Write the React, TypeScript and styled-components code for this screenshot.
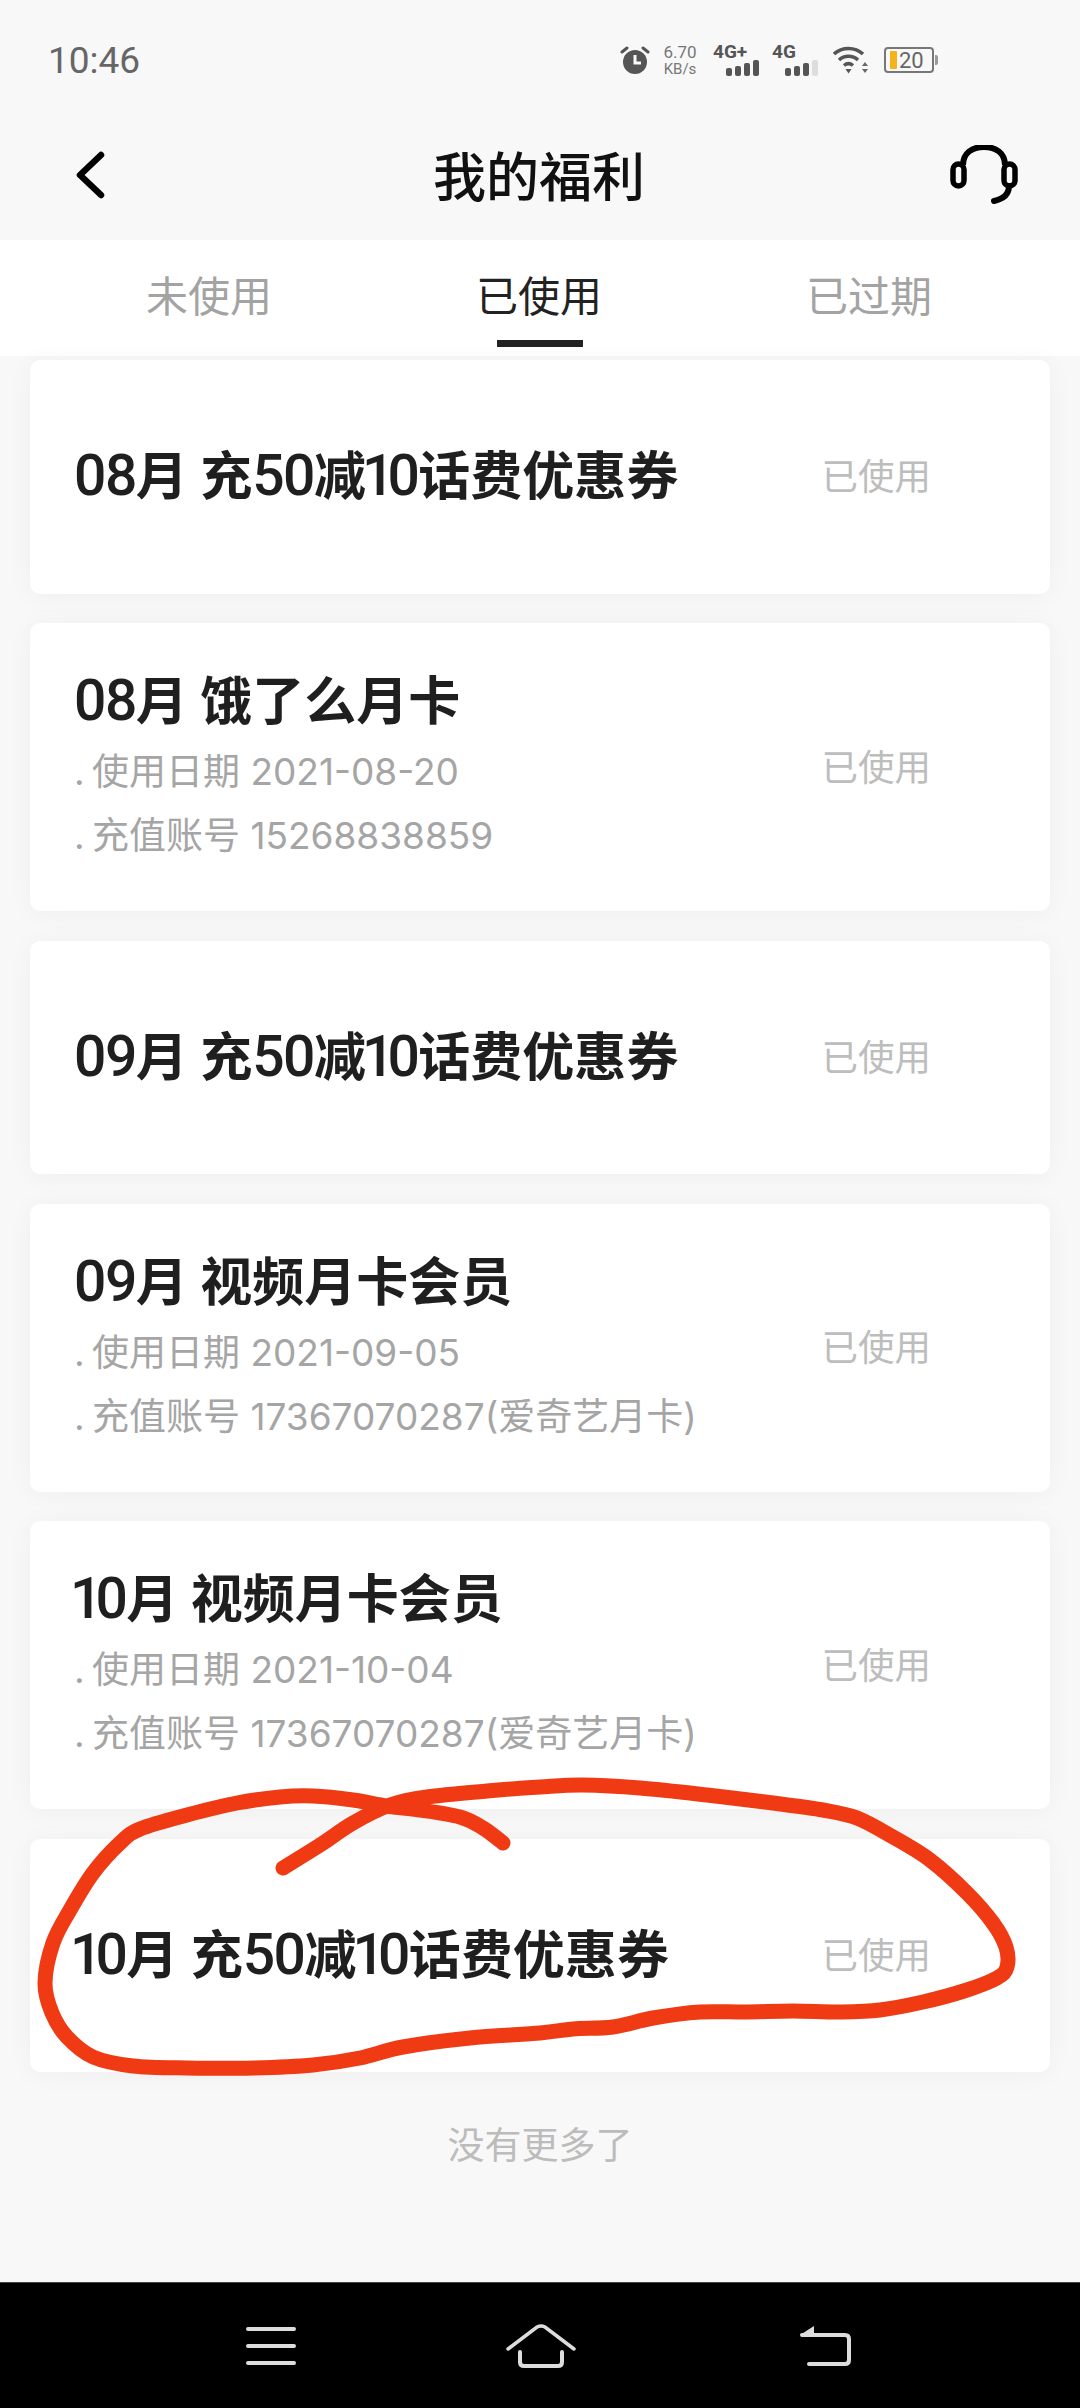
import React from "react";
import styled, { createGlobalStyle } from "styled-components";

const GlobalStyle = createGlobalStyle`
  html, body {
    margin: 0;
    padding: 0;
    background: #f8f8f8;
  }
  * {
    box-sizing: border-box;
  }
`;

const FONT = `Inter, "Noto Sans CJK SC", sans-serif`;

const Page = styled.div`
  position: relative;
  width: 1080px;
  height: 2408px;
  display: flex;
  flex-direction: column;
  overflow: hidden;
  background: #f8f8f8;
  font-family: ${FONT};
`;

const StatusBar = styled.div`
  flex: none;
  height: 118px;
  padding: 2px 146px 0 48px;
  display: flex;
  align-items: center;
  justify-content: space-between;
  color: #555;
`;

const Clock = styled.span`
  font-family: Roboto, sans-serif;
  font-size: 37px;
  color: #666;
`;

const StatusIcons = styled.div`
  display: flex;
  align-items: center;
`;

const Speed = styled.div`
  width: 38px;
  margin: 0 14px 0 11px;
  display: flex;
  flex-direction: column;
  align-items: center;
  font-family: Roboto, sans-serif;
  color: #777;
  font-size: 17px;
  line-height: 18px;
  small {
    font-size: 15px;
    line-height: 17px;
  }
`;

const Signal = styled.div<{ $gap: number }>`
  position: relative;
  width: 48px;
  height: 32px;
  margin-right: ${(p) => p.$gap}px;
`;

const SignalLabel = styled.span`
  position: absolute;
  left: 0;
  top: -2px;
  font-family: Roboto, sans-serif;
  font-size: 19px;
  line-height: 20px;
  font-weight: 700;
  color: #555;
`;

const Bars = styled.svg`
  position: absolute;
  right: 0;
  bottom: 0;
`;

const Battery = styled.div`
  position: relative;
  width: 50px;
  height: 26px;
  margin-left: 15px;
  border: 2px solid #777;
  border-radius: 4px;
  display: flex;
  align-items: center;
  padding-left: 4px;
  font-family: Roboto, sans-serif;
  font-size: 22px;
  color: #666;
  &::after {
    content: "";
    position: absolute;
    right: -6px;
    top: 6px;
    width: 3px;
    height: 10px;
    background: #999;
    border-radius: 0 2px 2px 0;
  }
`;

const BatteryFill = styled.i`
  width: 7px;
  height: 18px;
  margin-right: 2px;
  background: #f5b21b;
  border-radius: 1px;
`;

const Header = styled.header`
  flex: none;
  height: 122px;
  padding: 0 62px 8px 76px;
  display: grid;
  grid-template-columns: 357px auto 1fr;
  align-items: center;
`;

const Title = styled.h1`
  margin: 0 0 2px;
  font-size: 53px;
  font-weight: 500;
  color: #111;
`;

const Support = styled.svg`
  justify-self: end;
`;

const Tabs = styled.nav`
  flex: none;
  height: 116px;
  padding-right: 2px;
  background: #fff;
  display: flex;
  justify-content: center;
`;

const Tab = styled.div<{ $active?: boolean }>`
  position: relative;
  width: 330px;
  padding-top: 28px;
  text-align: center;
  font-size: 42px;
  line-height: 58px;
  color: ${(p) => (p.$active ? "#222" : "#a3a3a3")};
  ${(p) =>
    p.$active &&
    `
    &::after {
      content: "";
      position: absolute;
      left: 123px;
      top: 100px;
      width: 86px;
      height: 7px;
      background: #222;
    }
  `}
`;

const List = styled.main`
  flex: 1;
  min-height: 0;
  padding: 4px 30px 0;
  display: flex;
  flex-direction: column;
  gap: 29.5px;
  background: #f8f8f8;
`;

const Card = styled.article<{ $tall?: boolean }>`
  flex: none;
  height: ${(p) => (p.$tall ? 288 : 233.5)}px;
  padding: 0 119px 0 44px;
  background: #fff;
  border-radius: 10px;
  box-shadow: 0 2px 26px rgba(0, 0, 0, 0.045);
  display: flex;
  align-items: center;
  justify-content: space-between;
`;

const CardBody = styled.div`
  display: flex;
  flex-direction: column;
`;

const CardTitle = styled.h2`
  margin: 0;
  font-size: 52px;
  line-height: 70px;
  font-weight: 700;
  color: #1f1f1f;
  white-space: pre;
`;

// the digits in the titles are taller and narrower than the Chinese font's own
const TitleDigit = styled.span<{ $narrow?: boolean }>`
  font-family: Roboto, sans-serif;
  font-weight: 500;
  font-size: 57px;
  letter-spacing: ${(p) => (p.$narrow ? -7 : -1.5)}px;
  margin-left: ${(p) => (p.$narrow ? -4 : 0)}px;
`;

const CardLine = styled.p`
  margin: 0;
  font-size: 37px;
  line-height: 64px;
  color: #a5a5a5;
  &:nth-child(2) {
    margin-top: 3px;
  }
`;

const Bullet = styled.span`
  display: inline-block;
  width: 18px;
`;

const CardState = styled.span`
  margin-bottom: 4px;
  font-size: 36.5px;
  color: #bdbdbd;
`;

const EndNote = styled.div`
  padding-top: 19px;
  text-align: center;
  font-size: 37px;
  line-height: 50px;
  color: #bcbcbc;
`;

const NavBar = styled.footer`
  height: 126px;
  flex: none;
  background: #000;
  border-top: 1px solid #444;
  padding-left: 246px;
  display: flex;
  align-items: center;
`;

const NavIcon = styled.svg<{ $offset: number }>`
  margin-left: ${(p) => p.$offset}px;
`;

const Scribble = styled.svg`
  position: absolute;
  left: 0;
  top: 0;
  pointer-events: none;
`;

const cards = [
  { title: "08月 充50减10话费优惠券" },
  { title: "08月 饿了么月卡", lines: ["使用日期 2021-08-20", "充值账号 15268838859"] },
  { title: "09月 充50减10话费优惠券" },
  { title: "09月 视频月卡会员", lines: ["使用日期 2021-09-05", "充值账号 17367070287(爱奇艺月卡)"] },
  { title: "10月 视频月卡会员", lines: ["使用日期 2021-10-04", "充值账号 17367070287(爱奇艺月卡)"] },
  { title: "10月 充50减10话费优惠券" },
];

// pen stroke of the red circle, traced point by point
const stroke: [number, number][] = [
  [503, 1843], [483, 1828], [460, 1817], [420, 1810], [387, 1806], [353, 1800], [313, 1796],
  [280, 1797], [237, 1803], [187, 1815], [140, 1829], [120, 1843], [93, 1873], [70, 1910],
  [53, 1943], [45, 1983], [52, 2013], [67, 2037], [93, 2057], [133, 2066], [187, 2068],
  [253, 2068], [313, 2065], [360, 2058], [403, 2047], [470, 2038], [540, 2033], [573, 2029],
  [613, 2027], [653, 2018], [700, 2012], [747, 2012], [793, 2011], [840, 2012], [880, 2010],
  [923, 2002], [967, 1990], [997, 1978], [1007, 1967], [1006, 1947], [993, 1923], [967, 1893],
  [930, 1860], [893, 1837], [857, 1818], [823, 1810], [773, 1803], [707, 1795], [640, 1788],
  [583, 1785], [540, 1787], [487, 1791], [427, 1797], [390, 1805], [353, 1823], [320, 1845],
  [283, 1868],
];

function smoothPath(pts: [number, number][]) {
  let d = `M${pts[0][0]} ${pts[0][1]}`;
  for (let i = 0; i < pts.length - 1; i++) {
    const p0 = pts[i - 1] || pts[i];
    const p1 = pts[i];
    const p2 = pts[i + 1];
    const p3 = pts[i + 2] || p2;
    const c1x = p1[0] + (p2[0] - p0[0]) / 6;
    const c1y = p1[1] + (p2[1] - p0[1]) / 6;
    const c2x = p2[0] - (p3[0] - p1[0]) / 6;
    const c2y = p2[1] - (p3[1] - p1[1]) / 6;
    d += ` C${c1x.toFixed(1)} ${c1y.toFixed(1)} ${c2x.toFixed(1)} ${c2y.toFixed(1)} ${p2[0]} ${p2[1]}`;
  }
  return d;
}

function titleParts(title: string) {
  return Array.from(title).map((ch, i) =>
    /\d/.test(ch) ? (
      <TitleDigit key={i} $narrow={ch === "1"}>
        {ch}
      </TitleDigit>
    ) : (
      ch
    )
  );
}

function SignalBars({ level }: { level: number }) {
  const heights = [8, 10, 13, 16];
  return (
    <Bars width="36" height="16" viewBox="0 0 36 16">
      {heights.map((h, i) => (
        <rect
          key={i}
          x={i * 9 + 1}
          y={16 - h}
          width="6"
          height={h}
          rx="2"
          fill={i < level ? "#555" : "#ddd"}
        />
      ))}
    </Bars>
  );
}

export default function App() {
  return (
    <Page>
      <GlobalStyle />
      <StatusBar>
        <Clock>10:46</Clock>
        <StatusIcons>
          <svg width="30" height="30" viewBox="0 0 30 30">
            <circle cx="15" cy="17" r="12" fill="#555" />
            <path d="M15 10v8h6" fill="none" stroke="#f8f8f8" strokeWidth="3" />
            <path d="M2 7l5-4M28 7l-5-4" stroke="#555" strokeWidth="3" strokeLinecap="round" />
          </svg>
          <Speed>
            6.70
            <small>KB/s</small>
          </Speed>
          <Signal $gap={11}>
            <SignalLabel>4G+</SignalLabel>
            <SignalBars level={4} />
          </Signal>
          <Signal $gap={13}>
            <SignalLabel>4G</SignalLabel>
            <SignalBars level={3} />
          </Signal>
          <svg width="36" height="28" viewBox="0 0 36 28">
            <path d="M1 8c8-7.500 21-7.500 29 0" fill="none" stroke="#555" strokeWidth="3.500" />
            <path d="M6 14c5.500-5 13.500-5 19 0" fill="none" stroke="#555" strokeWidth="3.500" />
            <path d="M11 19.500c3-2.500 6-2.500 9 0" fill="none" stroke="#555" strokeWidth="3.500" />
            <path d="M12.500 23h6l-3 4.500z" fill="#555" />
            <path d="M32 16l3 4h-6zM32 27l-3-4h6z" fill="#666" />
          </svg>
          <Battery>
            <BatteryFill />
            20
          </Battery>
        </StatusIcons>
      </StatusBar>

      <Header>
        <svg width="29" height="48" viewBox="0 0 29 48">
          <path d="M25 4L4 24l21 20" fill="none" stroke="#000" strokeWidth="6.500" strokeLinecap="round" strokeLinejoin="round" />
        </svg>
        <Title>我的福利</Title>
        <Support width="68" height="60" viewBox="0 0 68 60">
          <path d="M13 20C13 8 22 2 34 2s21 6 21 18" fill="none" stroke="#000" strokeWidth="6" />
          <rect x="3" y="19" width="11" height="22" rx="5.500" fill="none" stroke="#000" strokeWidth="5.500" />
          <rect x="54" y="19" width="11" height="22" rx="5.500" fill="none" stroke="#000" strokeWidth="5.500" />
          <path d="M59 41c0 8-6 13-15 15" fill="none" stroke="#000" strokeWidth="6" strokeLinecap="round" />
        </Support>
      </Header>

      <Tabs>
        <Tab>未使用</Tab>
        <Tab $active>已使用</Tab>
        <Tab>已过期</Tab>
      </Tabs>

      <List>
        {cards.map((card, i) => (
          <Card key={i} $tall={!!card.lines}>
            <CardBody>
              <CardTitle>{titleParts(card.title)}</CardTitle>
              {card.lines?.map((line) => (
                <CardLine key={line}>
                  <Bullet>.</Bullet>
                  {line}
                </CardLine>
              ))}
            </CardBody>
            <CardState>已使用</CardState>
          </Card>
        ))}
        <EndNote>没有更多了</EndNote>
      </List>

      <NavBar>
        <NavIcon $offset={0} width="50" height="38" viewBox="0 0 50 38">
          <path d="M2 2h46M2 19h46M2 36h46" stroke="#ddd" strokeWidth="4" strokeLinecap="round" />
        </NavIcon>
        <NavIcon $offset={210} width="70" height="44" viewBox="0 0 70 44">
          <path d="M2 25L31 3q4-2 8 0l29 22" fill="none" stroke="#ddd" strokeWidth="3.500" strokeLinecap="round" />
          <path d="M14 28v10q0 4 4 4h34q4 0 4-4V28" fill="none" stroke="#ddd" strokeWidth="4" strokeLinecap="round" />
        </NavIcon>
        <NavIcon $offset={223} width="52" height="42" viewBox="0 0 52 42">
          <path d="M1 10L15 1v9z" fill="#ddd" />
          <path d="M3 10h43q4 0 4 4v21q0 4-4 4H10" fill="none" stroke="#ddd" strokeWidth="4" strokeLinecap="round" />
        </NavIcon>
      </NavBar>

      <Scribble width="1080" height="2408" viewBox="0 0 1080 2408">
        <path d={smoothPath(stroke)} fill="none" stroke="#ef3a14" strokeWidth="15" strokeLinecap="round" strokeLinejoin="round" />
      </Scribble>
    </Page>
  );
}
